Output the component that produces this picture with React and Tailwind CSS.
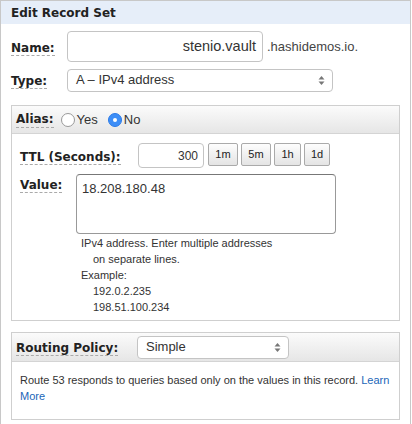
const Label = ({ children, className = "" }) => (
  <span
    className={`font-bold text-[12px] text-[#222] border-b border-dashed border-[#aaa] leading-[15px] ${className}`}
    style={{ fontFamily: '"DejaVu Sans", Verdana, sans-serif' }}
  >
    {children}
  </span>
);

const Arrows = () => (
  <svg width="7" height="11" viewBox="0 0 7 11" className="shrink-0">
    <path d="M3.5 1 L6.5 4.5 L0.5 4.5 Z" fill="#777" />
    <path d="M3.5 10 L6.5 6.5 L0.5 6.5 Z" fill="#777" />
  </svg>
);

const Radio = ({ checked }) =>
  checked ? (
    <span className="block w-[14px] h-[14px] rounded-full bg-[#3d8ef7] border border-[#2a7ae8] flex items-center justify-center">
      <span className="block w-[4px] h-[4px] rounded-full bg-white" />
    </span>
  ) : (
    <span className="block w-[14px] h-[14px] rounded-full bg-white border border-[#999]" />
  );

const TtlButton = ({ children, w }) => (
  <button
    className={`h-[23px] ${w} border border-[#aaa] rounded-[2px] bg-gradient-to-b from-[#fdfdfd] to-[#e4e4e4] text-[11px] text-[#222] flex items-center justify-center`}
  >
    {children}
  </button>
);

export default function App() {
  return (
    <div
      className="w-[411px] h-[430px] bg-white border border-[#c8c8c8] text-[#333]"
      style={{ fontFamily: '"Liberation Sans", Arial, sans-serif' }}
    >
      <div
        className="h-[23px] bg-[#e6eef9] pl-[10px] flex items-center text-[12px] font-bold text-[#222]"
        style={{ fontFamily: '"DejaVu Sans", Verdana, sans-serif' }}
      >
        Edit Record Set
      </div>

      <div className="px-[10px]">
        <div className="flex items-center mt-[7px]">
          <div className="w-[56px]">
            <Label>Name:</Label>
          </div>
          <div className="w-[196px] h-[31px] border border-[#c4c4c4] rounded-[4px] flex items-center justify-end pr-[6px] text-[14.5px] text-[#333]">
            stenio.vault
          </div>
          <span className="ml-[4px] text-[13px] text-[#444]">.hashidemos.io.</span>
        </div>

        <div className="flex items-center mt-[6px]">
          <div className="w-[56px]">
            <Label>Type:</Label>
          </div>
          <div className="w-[266px] h-[23px] border border-[#c4c4c4] rounded-[4px] flex items-center justify-between pl-[8px] pr-[7px] text-[13px] text-[#333]">
            <span>A – IPv4 address</span>
            <Arrows />
          </div>
        </div>

        <div className="mt-[13px] border border-[#cfcfcf] h-[216px]">
          <div className="h-[28px] bg-gradient-to-b from-[#fbfbfb] to-[#e6e6e6] border-b border-[#d4d4d4] flex items-center pl-[4px]">
            <Label>Alias:</Label>
            <span className="ml-[7px]">
              <Radio />
            </span>
            <span className="ml-[2px] text-[13px] text-[#333]">Yes</span>
            <span className="ml-[10px]">
              <Radio checked />
            </span>
            <span className="ml-[2px] text-[13px] text-[#333]">No</span>
          </div>

          <div className="flex items-center mt-[9px] pl-[8px]">
            <div className="w-[118px]">
              <Label>TTL (Seconds):</Label>
            </div>
            <div className="w-[66px] h-[25px] border border-[#c4c4c4] rounded-[4px] flex items-center justify-end pr-[5px] text-[12px] text-[#333]">
              300
            </div>
            <div className="flex gap-[3px] ml-[4px] -mt-[3px]">
              <TtlButton w="w-[30px]">1m</TtlButton>
              <TtlButton w="w-[30px]">5m</TtlButton>
              <TtlButton w="w-[27px]">1h</TtlButton>
              <TtlButton w="w-[26px]">1d</TtlButton>
            </div>
          </div>

          <div className="flex mt-[6px] pl-[8px]">
            <div className="w-[56px] -mt-[2px]">
              <Label>Value:</Label>
            </div>
            <div>
              <div className="w-[260px] h-[60px] border border-[#999] border-t-[#777] rounded-[4px] pl-[5px] pt-[6px] text-[13px] text-[#333] leading-[16px]">
                18.208.180.48
              </div>
              <div className="text-[11px] leading-[16px] text-[#333] pl-[5px] mt-[1px]">
                <div>IPv4 address. Enter multiple addresses</div>
                <div className="pl-[12px]">on separate lines.</div>
                <div>Example:</div>
                <div className="pl-[12px]">192.0.2.235</div>
                <div className="pl-[12px]">198.51.100.234</div>
              </div>
            </div>
          </div>
        </div>

        <div className="mt-[11px] border border-[#cfcfcf] h-[88px]">
          <div className="h-[29px] bg-gradient-to-b from-[#fbfbfb] to-[#e6e6e6] border-b border-[#d4d4d4] flex items-center pl-[4px]">
            <div className="w-[121px]">
              <Label>Routing Policy:</Label>
            </div>
            <div className="w-[152px] h-[23px] bg-white border border-[#c4c4c4] rounded-[4px] flex items-center justify-between pl-[8px] pr-[7px] text-[13px] text-[#333]">
              <span>Simple</span>
              <Arrows />
            </div>
          </div>
          <p className="pl-[8px] pr-[4px] pt-[10px] text-[11px] leading-[16px] text-[#333]">
            Route 53 responds to queries based only on the values in this record.{" "}
            <a className="text-[#1a66b8]">Learn More</a>
          </p>
        </div>
      </div>
    </div>
  );
}
